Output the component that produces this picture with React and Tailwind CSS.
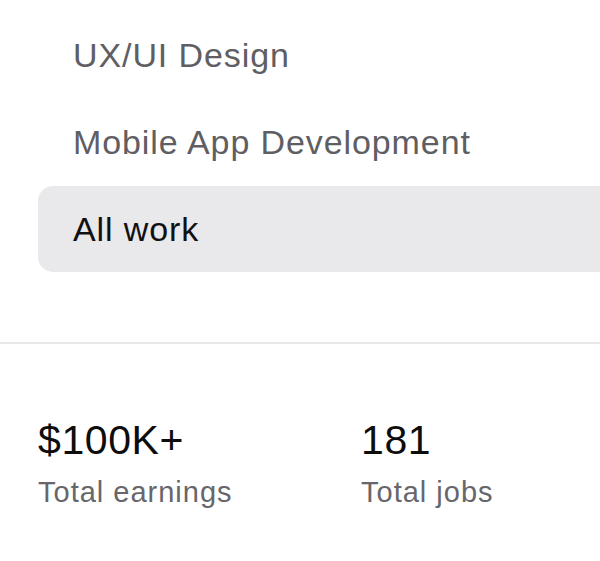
import React from 'react';

const categories = ['UX/UI Design', 'Mobile App Development', 'All work'];

const stats = [
  { value: '$100K+', label: 'Total earnings' },
  { value: '181', label: 'Total jobs' },
];

export default function App() {
  const active = 'All work';

  return (
    <div className="w-[600px] h-[561px] overflow-hidden bg-white font-['Liberation_Sans',Arial,sans-serif]">
      <ul className="flex flex-col gap-px pt-[12px] pl-[38px]">
        {categories.map((c) => (
          <li
            key={c}
            className={
              c === active
                ? 'flex items-center h-[86px] pl-[35px] rounded-l-[15px] bg-[#e9e8eb] text-[#111111] text-[34px] tracking-[0.9px]'
                : 'flex items-center h-[86px] pl-[35px] text-[#5f5e63] text-[34px] tracking-[0.9px]'
            }
          >
            {c}
          </li>
        ))}
      </ul>

      <div className="mt-[70px] h-[2px] bg-[#e8e7ea]" />

      <div className="flex pt-[76px] pl-[38px]">
        {stats.map((s) => (
          <div key={s.label} className="w-[323px] shrink-0 flex flex-col">
            <span className="text-[41px] leading-[41px] tracking-[0.6px] text-[#0d0d0d]">{s.value}</span>
            <span className="mt-[17px] text-[29px] leading-[29px] tracking-[1px] text-[#67666b]">{s.label}</span>
          </div>
        ))}
      </div>
    </div>
  );
}
